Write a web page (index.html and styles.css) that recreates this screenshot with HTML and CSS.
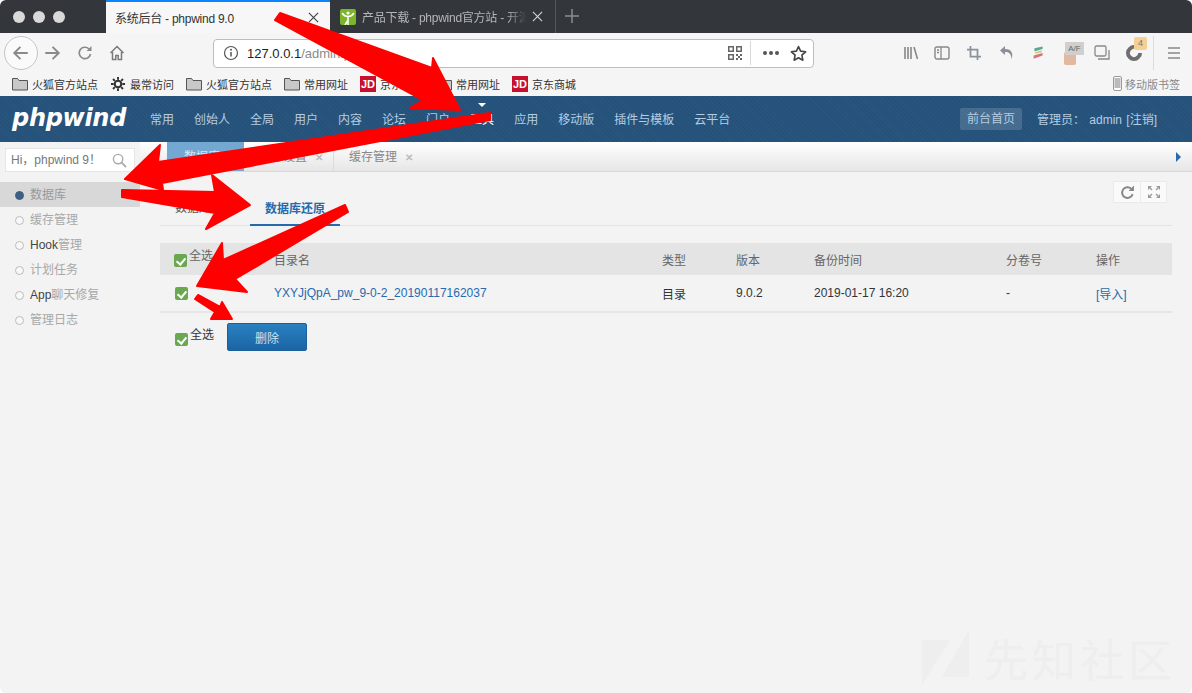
FILE: index.html
```html
<!DOCTYPE html>
<html lang="en">
  <head>
    <meta charset="UTF-8" />
    <title>系统后台 - phpwind 9.0</title>
    <link rel="stylesheet" href="styles.css">
  </head>
  <body>
    <div class="window">
      <div class="tabstrip">
        <div class="traffic"><i></i><i></i><i></i></div>
        <div class="tab tab-active">
          <span class="tab-title">系统后台 - phpwind 9.0</span>
          <svg class="tab-close" viewBox="0 0 12 12"><path d="M1 1l10 10M11 1L1 11" stroke="#444" stroke-width="1.300"/></svg>
        </div>
        <div class="tab tab-other">
          <svg class="favicon" viewBox="0 0 16 16"><rect width="16" height="16" rx="2" fill="#7cb52a"/><circle cx="8" cy="4" r="1.6" fill="#fff"/><path d="M2 4c2 3 4 3.500 6 3.500S12 7 14 4M8 7v9M8 11l-3 5" stroke="#fff" stroke-width="1.500" fill="none"/></svg>
          <span class="tab-title tab-fade">产品下载 - phpwind官方站 - 开源</span>
          <svg class="tab-close" viewBox="0 0 12 12"><path d="M1 1l10 10M11 1L1 11" stroke="#d0d0d0" stroke-width="1.300"/></svg>
        </div>
        <svg class="newtab" viewBox="0 0 16 16"><path d="M8 1v14M1 8h14" stroke="#8b8e91" stroke-width="1.500"/></svg>
      </div>

      <div class="toolbar">
        <div class="back-btn">
          <svg viewBox="0 0 16 16"><path d="M14 8H2M7.500 2.500L2 8l5.500 5.500" stroke="#8a8a8a" stroke-width="1.700" fill="none"/></svg>
        </div>
        <svg class="tool-icon fwd" viewBox="0 0 16 16"><path d="M2 8h12M8.500 2.500L14 8l-5.500 5.500" stroke="#8a8a8a" stroke-width="1.700" fill="none"/></svg>
        <svg class="tool-icon reload" viewBox="0 0 16 16"><path d="M13.500 9a5.700 5.700 0 1 1-1.500-5" stroke="#8a8a8a" stroke-width="1.700" fill="none"/><path d="M14.500 1v5h-5z" fill="#8a8a8a"/></svg>
        <svg class="tool-icon home" viewBox="0 0 16 16"><path d="M1.500 8L8 1.500 14.500 8M3.500 7v7.500h3.300v-4h2.400v4h3.300V7" stroke="#7a7a7a" stroke-width="1.500" fill="none"/></svg>
        <div class="urlbar">
          <svg class="info" viewBox="0 0 16 16"><circle cx="8" cy="8" r="6.500" stroke="#555" stroke-width="1.200" fill="none"/><path d="M8 7v4.500" stroke="#555" stroke-width="1.500"/><circle cx="8" cy="4.800" r="1" fill="#555"/></svg>
          <span class="url"><b>127.0.0.1</b>/admin.php?</span>
          <svg class="qr" viewBox="0 0 14 14"><path d="M0 0h6v6H0zM1.500 1.500v3h3v-3zM8 0h6v6H8zM9.500 1.500v3h3v-3zM0 8h6v6H0zM1.500 9.500v3h3v-3zM8 8h2v2H8zM12 8h2v2h-2zM10 10h2v2h-2zM8 12h2v2H8zM12 12h2v2h-2z" fill="#666" fill-rule="evenodd"/></svg>
          <span class="url-sep"></span>
          <span class="dots"><i></i><i></i><i></i></span>
          <svg class="star" viewBox="0 0 16 16"><path d="M8 1.500l2 4.300 4.700.6-3.500 3.200.9 4.700L8 12l-4.100 2.300.9-4.700L1.300 6.400 6 5.800z" stroke="#444" stroke-width="1.500" fill="none" stroke-linejoin="round"/></svg>
        </div>
        <div class="tool-right">
          <svg class="r-lib" viewBox="0 0 16 16"><path d="M2 2v12M5 2v12M8 2v12M11 2l3.500 12" stroke="#888" stroke-width="1.600"/></svg>
          <svg class="r-side" viewBox="0 0 16 16"><rect x="1" y="2" width="14" height="12" rx="2" stroke="#888" stroke-width="1.400" fill="none"/><path d="M7 2v12M3 5h2M3 7.500h2" stroke="#888" stroke-width="1.300"/></svg>
          <svg class="r-crop" viewBox="0 0 16 16"><path d="M4 0v12h12M0 4h12v12" stroke="#8a929a" stroke-width="2" fill="none"/></svg>
          <svg class="r-undo" viewBox="0 0 16 16"><path d="M6 1L1 5.500 6 10V7c4 0 6 1.500 6.500 7 2-5 .5-10-6.500-10z" fill="#8b9096"/></svg>
          <svg class="r-color" viewBox="0 0 16 16"><path d="M3 2l10-2v3L3 6z" fill="#5aa88e"/><path d="M4 7l8-2v2L4 9z" fill="#d9c27a"/><path d="M2 11l11-3v3L2 15z" fill="#d9707a"/></svg>
          <span class="r-af"><span class="af-box"></span><span class="af-tag">A/F</span></span>
          <svg class="r-win" viewBox="0 0 16 16"><rect x="1" y="1" width="11" height="10" rx="1.500" stroke="#888" stroke-width="1.300" fill="none"/><path d="M4 14h11V5" stroke="#888" stroke-width="1.300" fill="none"/></svg>
          <span class="r-ring"><span class="ring"></span><span class="ring-badge">4</span></span>
          <span class="tool-sep"></span>
          <svg class="r-menu" viewBox="0 0 14 14"><path d="M1 2h12M1 7h12M1 12h12" stroke="#888" stroke-width="1.500"/></svg>
        </div>
      </div>

      <div class="bookmarks">
        <span class="bm"><svg class="folder" viewBox="0 0 16 14"><path d="M.5 13V1.500h5l1.500 2h8.500V13z" fill="#c8c8c8" stroke="#555"/></svg>火狐官方站点</span>
        <span class="bm"><svg class="gear" viewBox="0 0 16 16"><circle cx="8" cy="8" r="3.800" stroke="#333" stroke-width="2.400" fill="none"/><path d="M8 0v3M8 13v3M0 8h3M13 8h3M2.300 2.300l2.100 2.100M11.600 11.600l2.100 2.100M2.300 13.700l2.100-2.100M11.600 4.400l2.100-2.100" stroke="#333" stroke-width="2.200"/></svg>最常访问</span>
        <span class="bm"><svg class="folder" viewBox="0 0 16 14"><path d="M.5 13V1.500h5l1.500 2h8.500V13z" fill="#c8c8c8" stroke="#555"/></svg>火狐官方站点</span>
        <span class="bm"><svg class="folder" viewBox="0 0 16 14"><path d="M.5 13V1.500h5l1.500 2h8.500V13z" fill="#c8c8c8" stroke="#555"/></svg>常用网址</span>
        <span class="bm"><span class="jd">JD</span>京东商城</span>
        <span class="bm"><svg class="folder" viewBox="0 0 16 14"><path d="M.5 13V1.500h5l1.500 2h8.500V13z" fill="#c8c8c8" stroke="#555"/></svg>常用网址</span>
        <span class="bm"><span class="jd">JD</span>京东商城</span>
        <span class="bm bm-mobile"><svg class="phone" viewBox="0 0 9 15"><rect x=".5" y=".5" width="8" height="14" rx="1.500" fill="#fff" stroke="#999"/><rect x="1.500" y="2" width="6" height="10" fill="#bbb"/></svg>移动版书签</span>
      </div>

      <div class="topnav">
        <div class="logo">phpwind</div>
        <ul class="menu">
          <li>常用</li>
          <li>创始人</li>
          <li>全局</li>
          <li>用户</li>
          <li>内容</li>
          <li>论坛</li>
          <li>门户</li>
          <li class="current">工具</li>
          <li>应用</li>
          <li>移动版</li>
          <li>插件与模板</li>
          <li>云平台</li>
        </ul>
        <a class="front-btn">前台首页</a>
        <div class="admin">管理员： admin [注销]</div>
      </div>

      <div class="body">
        <div class="sidebar">
          <div class="search">
            <span>Hi，phpwind 9！</span>
            <svg viewBox="0 0 16 16"><circle cx="6.500" cy="6.500" r="5" stroke="#aaa" stroke-width="1.500" fill="none"/><path d="M10 10l5 5" stroke="#aaa" stroke-width="2"/></svg>
          </div>
          <ul class="side-list">
            <li class="on">数据库</li>
            <li>缓存管理</li>
            <li><em>Hook</em>管理</li>
            <li>计划任务</li>
            <li><em>App</em>聊天修复</li>
            <li>管理日志</li>
          </ul>
        </div>

        <div class="main">
          <div class="tabbar">
            <span class="ptab ptab-on">数据库</span>
            <span class="ptab">缓存设置<i>✕</i></span>
            <span class="ptab ptab-last">缓存管理<i>✕</i></span>
            <span class="tabbar-next"></span>
          </div>
          <div class="content">
            <div class="actions">
              <span class="act-btn"><svg viewBox="0 0 14 14"><path d="M11.800 8.500a5 5 0 1 1-1.300-5" stroke="#888" stroke-width="1.800" fill="none"/><path d="M13 .5v5H8z" fill="#888"/></svg></span>
              <span class="act-btn"><svg viewBox="0 0 12 12"><path d="M0 0h4L0 4zM12 0v4L8 0zM0 12V8l4 4zM12 12H8l4-4z" fill="#999"/><path d="M2 2l2 2M10 2L8 4M2 10l2-2M10 10L8 8" stroke="#999" stroke-width="1.200"/></svg></span>
            </div>
            <div class="subtabs">
              <span class="subtab">数据库备份</span>
              <span class="subtab subtab-on">数据库还原</span>
            </div>
            <table class="grid">
              <colgroup>
                <col class="c1"><col class="c2"><col class="c3"><col class="c4"><col class="c5"><col class="c6"><col class="c7">
              </colgroup>
              <thead>
                <tr>
                  <th><label class="checkall"><span class="check"></span>全选</label></th>
                  <th>目录名</th>
                  <th>类型</th>
                  <th>版本</th>
                  <th>备份时间</th>
                  <th>分卷号</th>
                  <th>操作</th>
                </tr>
              </thead>
              <tbody>
                <tr>
                  <td><span class="check check-row"></span></td>
                  <td><a>YXYJjQpA_pw_9-0-2_20190117162037</a></td>
                  <td>目录</td>
                  <td>9.0.2</td>
                  <td>2019-01-17 16:20</td>
                  <td>-</td>
                  <td><a>[导入]</a></td>
                </tr>
              </tbody>
            </table>
            <div class="footer-row">
              <label class="checkall"><span class="check"></span>全选</label>
              <button class="btn-del">删除</button>
            </div>
          </div>
        </div>
      </div>

      <div class="watermark">
        <svg viewBox="0 0 48 56"><path d="M0 10h28L0 55zM47 0v47H20z" fill="#eeeeee"/></svg>
        <span>先知社区</span>
      </div>

      <!-- annotation arrows drawn on top of the screenshot -->
      <svg class="arrows" viewBox="0 0 1192 693">
        <polygon points="280,13 432,68 433,58 460,110 410,108 423,100 275,20"/>
        <polygon points="490,113 158,162 160,145 125,179 163,190 162,183 490,120"/>
        <polygon points="122,190 215,192 212,175 250,205 206,229 215,213 122,197"/>
        <polygon points="345,205 223,260 222,243 197,286 247,292 235,279 348,212"/>
        <polygon points="198,295 220,307 222,302 232,319 211,319 215,312 195,299"/>
      </svg>
    </div>
  </body>
</html>
```
FILE: styles.css
```css
* {
  box-sizing: border-box;
}
html,
body {
  margin: 0;
  height: 100%;
  background: #fff;
}
body {
  font-family: "Liberation Sans", "Noto Sans CJK SC", sans-serif;
  font-size: 12px;
  color: #333;
  overflow: hidden;
}
ul {
  list-style: none;
  margin: 0;
  padding: 0;
}
.window {
  position: relative;
  width: 1192px;
  height: 693px;
  display: flex;
  flex-direction: column;
  background: #f3f3f3;
  border-radius: 6px;
  overflow: hidden;
}

/* browser tabs */
.tabstrip {
  height: 33px;
  flex: none;
  display: flex;
  background: #33363a;
}
.traffic {
  width: 106px;
  display: flex;
  gap: 8px;
  padding: 11px 0 0 13px;
}
.traffic i {
  width: 12px;
  height: 12px;
  border-radius: 50%;
  background: #d9d9d9;
}
.tab {
  display: flex;
  align-items: center;
  font-size: 12px;
}
.tab-title {
  letter-spacing: -0.25px;
  white-space: nowrap;
}
.tab-active {
  width: 224px;
  padding: 0 11px 0 9px;
  background: #f7f7f7;
  border-top: 2px solid #0a84ff;
  color: #333;
  justify-content: space-between;
}
.tab-other {
  width: 226px;
  padding: 0 12px 0 10px;
  color: #b4b6b8;
  border-right: 1px solid #55585b;
}
.tab-close {
  width: 11px;
  height: 11px;
  flex: none;
}
.favicon {
  width: 16px;
  height: 16px;
  flex: none;
  margin-right: 6px;
}
.tab-fade {
  flex: 1;
  mask-image: linear-gradient(to right, #000 85%, transparent 97%);
}
.newtab {
  width: 16px;
  height: 16px;
  margin: 8px 0 0 8px;
}

/* browser toolbar */
.toolbar {
  height: 38px;
  flex: none;
  position: relative;
  display: flex;
  align-items: center;
  background: #f5f5f5;
  padding: 2px 0 0 4px;
}
.back-btn {
  width: 34px;
  height: 34px;
  border-radius: 50%;
  border: 1px solid #c4c4c4;
  background: #fafafa;
  display: flex;
  align-items: center;
  justify-content: center;
}
.back-btn svg {
  width: 18px;
  height: 18px;
}
.tool-icon {
  width: 16px;
  height: 16px;
}
.fwd {
  margin-left: 5px;
  width: 18px;
  height: 18px;
}
.reload {
  margin-left: 16px;
}
.home {
  margin-left: 16px;
}
.urlbar {
  width: 601px;
  height: 29px;
  margin-left: 88px;
  display: flex;
  align-items: center;
  background: #fff;
  border: 1px solid #bdbdbd;
  border-radius: 4px;
  padding: 0 6px 0 9px;
}
.info {
  width: 16px;
  height: 16px;
}
.url {
  margin-left: 8px;
  font-size: 13px;
  color: #8a8a8a;
  flex: 1;
}
.url b {
  font-weight: normal;
  color: #222;
}
.qr {
  width: 14px;
  height: 14px;
}
.url-sep {
  width: 1px;
  height: 24px;
  background: #d8d8d8;
  margin: 0 12px 0 8px;
}
.dots {
  display: flex;
  gap: 2px;
}
.dots i {
  width: 4px;
  height: 4px;
  border-radius: 50%;
  background: #555;
}
.star {
  width: 17px;
  height: 17px;
  margin-left: 11px;
}
.tool-right {
  display: flex;
  align-items: center;
  margin-left: 89px;
  height: 100%;
}
.tool-right svg {
  width: 16px;
  height: 16px;
  flex: none;
}
.r-side {
  margin-left: 15px;
}
.tool-right .r-crop {
  width: 14px;
  height: 14px;
  margin-left: 17px;
}
.r-undo {
  margin-left: 18px;
}
.tool-right .r-color {
  width: 13px;
  margin-left: 17px;
}
.r-af {
  position: relative;
  width: 12px;
  height: 13px;
  margin: 10px 0 0 19px;
}
.af-box {
  display: block;
  width: 12px;
  height: 13px;
  background: #e2b9a0;
  border-radius: 2px;
}
.af-tag {
  position: absolute;
  top: -10px;
  left: 1px;
  width: 19px;
  height: 13px;
  background: #cfcfcf;
  font-size: 8px;
  line-height: 13px;
  text-align: center;
  color: #666;
}
.r-win {
  margin-left: 18px;
}
.r-ring {
  position: relative;
  margin-left: 16px;
  width: 16px;
  height: 16px;
}
.ring {
  display: block;
  width: 16px;
  height: 16px;
  border: 4px solid #6e6e6e;
  border-top-color: transparent;
  border-radius: 50%;
  transform: rotate(45deg);
}
.ring-badge {
  position: absolute;
  top: -8px;
  left: 8px;
  width: 13px;
  height: 13px;
  background: #f5cf94;
  border-radius: 2px;
  font-size: 9px;
  line-height: 13px;
  text-align: center;
  color: #777;
}
.tool-sep {
  width: 1px;
  height: 34px;
  background: #dcdcdc;
  margin-left: 11px;
}
.tool-right .r-menu {
  width: 14px;
  height: 14px;
  margin-left: 13px;
}

/* bookmarks */
.bookmarks {
  height: 25px;
  flex: none;
  display: flex;
  align-items: center;
  gap: 12px;
  padding-left: 12px;
  background: #f5f5f5;
  font-family: "Noto Sans CJK SC", sans-serif;
  font-size: 11px;
  color: #333;
}
.bm {
  display: flex;
  align-items: center;
  gap: 4px;
}
.folder {
  width: 16px;
  height: 14px;
}
.gear {
  width: 14px;
  height: 14px;
  margin: 0 1px;
}
.jd {
  width: 16px;
  height: 16px;
  background: #c8102e;
  color: #fff;
  font: bold 11px/16px "Liberation Sans", sans-serif;
  text-align: center;
}
.bm-mobile {
  margin-left: auto;
  padding-right: 12px;
  color: #888;
  gap: 3px;
}
.phone {
  width: 9px;
  height: 15px;
}

/* phpwind header */
.topnav {
  height: 46px;
  flex: none;
  display: flex;
  align-items: center;
  background-color: #25527b;
  background-image: repeating-linear-gradient(45deg, rgba(255, 255, 255, 0.025) 0 1px, transparent 1px 3px);
  color: #b5cde2;
}
.logo {
  width: 130px;
  padding-left: 12px;
  font-family: "DejaVu Sans", sans-serif;
  font-size: 24px;
  font-weight: bold;
  font-style: italic;
  letter-spacing: -0.3px;
  color: #fff;
  line-height: 44px;
  margin-bottom: 2px;
  white-space: nowrap;
}
.menu {
  display: flex;
  flex: 1;
  padding-left: 10px;
  margin-bottom: 2px;
}
.menu li {
  padding: 0 10px;
}
.menu li.current {
  position: relative;
  color: #fff;
}
.menu li.current::before {
  content: "";
  position: absolute;
  top: -7px;
  left: 50%;
  margin-left: -4px;
  border: 4px solid transparent;
  border-top-color: #fff;
}
.front-btn {
  width: 62px;
  height: 22px;
  line-height: 22px;
  text-align: center;
  background: rgba(255, 255, 255, 0.15);
  border-radius: 2px;
}
.admin {
  width: 170px;
  padding-left: 15px;
  margin-bottom: 2px;
  word-spacing: 1px;
  white-space: nowrap;
}

/* sidebar */
.body {
  flex: 1;
  display: flex;
  min-height: 0;
}
.sidebar {
  width: 140px;
  flex: none;
  padding-top: 6px;
}
.search {
  width: 130px;
  height: 24px;
  margin-left: 5px;
  padding: 0 7px 4px 5px;
  display: flex;
  align-items: center;
  justify-content: space-between;
  background: #fff;
  border: 1px solid #e6e6e6;
  color: #777;
}
.search svg {
  width: 15px;
  height: 15px;
  margin-top: 4px;
}
.side-list {
  margin-top: 10px;
}
.side-list li {
  position: relative;
  height: 25px;
  line-height: 26px;
  padding-left: 30px;
  color: #a8a8a8;
}
.side-list li::before {
  content: "";
  position: absolute;
  left: 15px;
  top: 9px;
  width: 7px;
  height: 7px;
  border: 1px solid #bbb;
  border-radius: 50%;
  background: #f8f8f8;
}
.side-list li em {
  font-style: normal;
  color: #444;
}
.side-list li.on {
  background: #d8d8d8;
  color: #999;
}
.side-list li.on::before {
  background: #3e5f80;
  border-color: #3e5f80;
}

/* main area */
.main {
  flex: 1;
  min-width: 0;
  display: flex;
  flex-direction: column;
}
.tabbar {
  height: 30px;
  flex: none;
  position: relative;
  display: flex;
  padding-left: 27px;
  background: linear-gradient(#fff, #e6e6e6);
  border-bottom: 1px solid #d9d9d9;
}
.ptab {
  width: 90px;
  line-height: 30px;
  padding-left: 15px;
  color: #888;
  border-right: 1px solid #dcdcdc;
  white-space: nowrap;
}
.ptab-last {
  border-right: 0;
}
.ptab i {
  font-style: normal;
  font-size: 10px;
  font-weight: bold;
  color: #bbb;
  margin-left: 8px;
}
.ptab-on {
  width: 77px;
  padding-left: 17px;
  background: #73a8d3;
  color: #d6e6f3;
  border-right: 0;
}
.tabbar-next {
  position: absolute;
  right: 11px;
  top: 10px;
  border: 5px solid transparent;
  border-left-color: #266aae;
  border-right-width: 0;
}
.content {
  flex: 1;
  position: relative;
  padding: 0 20px;
}
.actions {
  position: absolute;
  top: 9px;
  right: 25px;
  display: flex;
  background: #fafafa;
  border: 1px solid #eaeaea;
}
.act-btn {
  width: 26px;
  height: 20px;
  display: flex;
  align-items: center;
  justify-content: center;
}
.act-btn + .act-btn {
  border-left: 1px solid #eaeaea;
}
.act-btn svg {
  width: 15px;
  height: 15px;
}
.act-btn + .act-btn svg {
  width: 12px;
  height: 12px;
}
.subtabs {
  height: 54px;
  display: flex;
  align-items: flex-end;
  border-bottom: 1px solid #e4e4e4;
}
.subtab {
  width: 90px;
  height: 36px;
  line-height: 38px;
  text-align: center;
  color: #555;
}
.subtab-on {
  color: #266aae;
  font-weight: bold;
  border-bottom: 2px solid #266aae;
  margin-bottom: -1px;
}
.grid {
  width: 1012px;
  margin-top: 17px;
  border-collapse: collapse;
  table-layout: fixed;
}
.c1 {
  width: 100px;
}
.c2 {
  width: 388px;
}
.c3 {
  width: 74px;
}
.c4 {
  width: 78px;
}
.c5 {
  width: 192px;
}
.c6 {
  width: 90px;
}
.grid th {
  height: 32px;
  padding: 0 0 0 14px;
  background: #e4e4e4;
  text-align: left;
  font-weight: normal;
  color: #666;
}
.grid td {
  height: 37px;
  padding: 0 0 0 14px;
  color: #333;
  border-bottom: 2px solid #e6e6e6;
}
.grid a {
  color: #266aae;
}
.check {
  display: inline-block;
  position: relative;
  flex: none;
  width: 13px;
  height: 13px;
  border-radius: 2px;
  background: #6aa84f;
}
.check::after {
  content: "";
  position: absolute;
  left: 4px;
  top: 2px;
  width: 4px;
  height: 7px;
  border: solid #fff;
  border-width: 0 2px 2px 0;
  transform: rotate(40deg);
}
.check-row {
  margin-left: 1px;
  vertical-align: middle;
}
.checkall {
  display: inline-flex;
  align-items: flex-start;
  line-height: 14px;
}
.checkall .check {
  margin: 5px 2px 0 0;
}
.footer-row {
  display: flex;
  align-items: center;
  gap: 13px;
  padding: 10px 0 0 15px;
}
.btn-del {
  width: 80px;
  height: 28px;
  padding: 0;
  background: linear-gradient(#2b80c0, #1a65a5);
  border: 1px solid #1b6099;
  border-radius: 2px;
  color: #cfe2f2;
  font: 12px "Liberation Sans", "Noto Sans CJK SC", sans-serif;
}

.watermark {
  position: absolute;
  left: 922px;
  top: 630px;
  display: flex;
  color: #eeeeee;
  font-family: "Noto Sans CJK SC", sans-serif;
  font-size: 44px;
  letter-spacing: 4px;
  line-height: 56px;
  white-space: nowrap;
}
.watermark svg {
  width: 48px;
  height: 56px;
  margin-right: 14px;
}
.arrows {
  position: absolute;
  left: 0;
  top: 0;
  width: 1192px;
  height: 693px;
  pointer-events: none;
}
.arrows polygon {
  fill: #ff0000;
  stroke: #ff0000;
  stroke-width: 2;
  stroke-linejoin: round;
}
```
